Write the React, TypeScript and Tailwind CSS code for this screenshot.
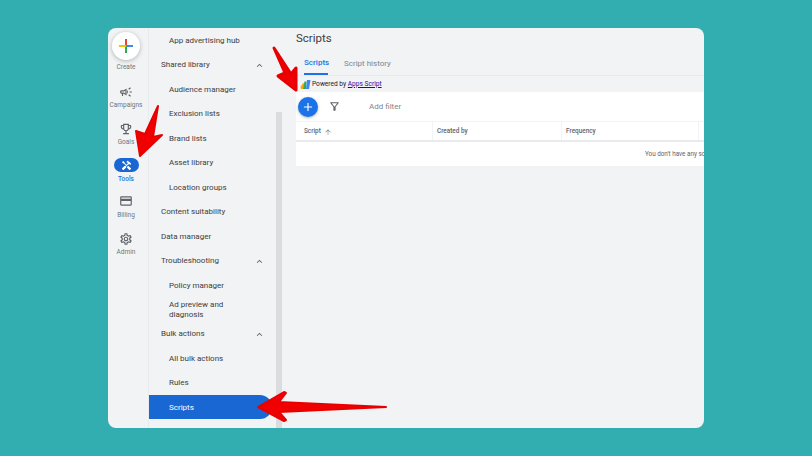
import React from 'react';
import {
  MdOutlineCampaign,
  MdOutlineEmojiEvents,
  MdHandyman,
  MdOutlineCreditCard,
  MdOutlineSettings,
  MdOutlineFilterAlt,
  MdKeyboardArrowUp,
  MdArrowUpward,
  MdAdd,
} from 'react-icons/md';

const font = { fontFamily: 'Roboto, "Liberation Sans", sans-serif' };

const GoogleAdsPlus = () => (
  <svg width="16" height="16" viewBox="0 0 16 16">
    <rect x="7" y="1" width="2" height="7" fill="#ea4335" />
    <rect x="8" y="7" width="7" height="2" fill="#4285f4" />
    <rect x="7" y="8" width="2" height="7" fill="#34a853" />
    <rect x="1" y="7" width="7" height="2" fill="#fbbc04" />
  </svg>
);

const AppsScriptLogo = () => (
  <svg width="11" height="11" viewBox="0 0 11 11" className="shrink-0">
    <path d="M0.5 8 L3 4 L4.5 5 L3 10 L1 10 Z" fill="#f9ab00" />
    <path d="M3 10 L4.5 2.5 L6.5 2.5 L6 10 Z" fill="#34a853" />
    <path d="M6 10 L7 1 L10.5 1 L9 10 Z" fill="#4285f4" />
  </svg>
);

const RailItem = ({ icon, label, className, labelGap }: { icon: React.ReactNode; label: string; className: string; labelGap: string }) => (
  <div className={`flex flex-col items-center ${className}`}>
    <div className="h-[14px] flex items-center justify-center text-[#5f6368]">{icon}</div>
    <span className={`text-[6.5px] leading-[9px] text-[#70757a] ${labelGap}`}>{label}</span>
  </div>
);

const Section = ({ label }: { label: string }) => (
  <div className="h-[24.5px] pt-[1px] flex items-center justify-between pl-[12px] pr-[7px] text-[8px] text-[#3c4043]">
    <span>{label}</span>
    <MdKeyboardArrowUp size={11} className="text-[#5f6368]" />
  </div>
);

const NavItem = ({ label }: { label: string }) => (
  <div className="h-[24.5px] pt-[1px] flex items-center pl-[20px] text-[8px] text-[#3c4043]">{label}</div>
);

const TopLevel = ({ label }: { label: string }) => (
  <div className="h-[24.5px] pt-[1px] flex items-center pl-[12px] text-[8px] text-[#3c4043]">{label}</div>
);

const Arrows = () => (
  <svg width="812" height="456" viewBox="0 0 812 456" className="absolute left-0 top-0 pointer-events-none">
    <g fill="#f00000" stroke="#e80000" strokeWidth="2" strokeLinejoin="round">
      <path d="M158 106 L153 137 L162 135 L140 156 L136 131 L145 134 Z" />
      <path d="M274 48 L291 74 L296 68 L296 90 L278 76 L285 73 Z" strokeWidth="3" />
      <path d="M386 407 L279 402 L286 393 L284 392 L258 407 L284 421 L286 420 L279 412 Z" />
    </g>
  </svg>
);

export default function App() {
  return (
    <div className="relative w-[812px] h-[456px] bg-[#32adb0] pt-[28px] pl-[108px] overflow-hidden" style={font}>
      <div className="w-[596px] h-[400px] bg-[#f1f3f4] rounded-[8px] overflow-hidden flex">
        {/* Icon rail */}
        <div className="w-[41px] shrink-0 pr-[4px] border-r border-[#e8eaed] flex flex-col items-center">
          <div className="mt-[4px] w-[28px] h-[28px] rounded-full bg-white shadow-[0_1px_4px_rgba(60,64,67,0.35)] flex items-center justify-center">
            <GoogleAdsPlus />
          </div>
          <span className="text-[6.5px] leading-[9px] mt-[3px] text-[#70757a]">Create</span>
          <RailItem icon={<MdOutlineCampaign size={14} />} label="Campaigns" className="mt-[13px]" labelGap="mt-[2px]" />
          <RailItem icon={<MdOutlineEmojiEvents size={14} />} label="Goals" className="mt-[12px]" labelGap="mt-[2px]" />
          <div className="mt-[11px] flex flex-col items-center">
            <div className="w-[25px] h-[14px] rounded-full bg-[#1967d2] flex items-center justify-center text-white">
              <MdHandyman size={11} />
            </div>
            <span className="text-[6.5px] leading-[9px] mt-[3px] font-medium text-[#1a73e8]">Tools</span>
          </div>
          <RailItem icon={<MdOutlineCreditCard size={14} />} label="Billing" className="mt-[10px]" labelGap="mt-[3px]" />
          <RailItem icon={<MdOutlineSettings size={14} />} label="Admin" className="mt-[12px]" labelGap="mt-[2px]" />
        </div>

        {/* Tool navigation */}
        <div className="w-[123px] shrink-0 flex flex-col">
          <NavItem label="App advertising hub" />
          <Section label="Shared library" />
          <NavItem label="Audience manager" />
          <NavItem label="Exclusion lists" />
          <NavItem label="Brand lists" />
          <NavItem label="Asset library" />
          <NavItem label="Location groups" />
          <TopLevel label="Content suitability" />
          <TopLevel label="Data manager" />
          <Section label="Troubleshooting" />
          <NavItem label="Policy manager" />
          <div className="h-[24px] pt-[1px] flex items-center pl-[20px] text-[8px] leading-[10px] text-[#3c4043]">
            Ad preview and
            <br />
            diagnosis
          </div>
          <Section label="Bulk actions" />
          <NavItem label="All bulk actions" />
          <NavItem label="Rules" />
          <div className="h-[24px] pt-[1px] flex items-center pl-[20px] text-[8px] text-white bg-[#1967d2] rounded-r-[12px]">
            Scripts
          </div>
        </div>

        {/* Scrollbar */}
        <div className="w-[14px] shrink-0 pl-[4px] pt-[84px]">
          <div className="w-[6px] h-full bg-[#dadce0]" />
        </div>

        {/* Main */}
        <div className="flex-1 min-w-0 flex flex-col pl-[10px]">
          <div className="text-[11.5px] leading-[14px] text-[#3c4043] mt-[3px]">Scripts</div>
          <div className="h-[24px] mt-[7px] flex items-end gap-[16px] pl-[8px] border-b border-[#e8eaed] text-[8px]">
            <div className="h-full flex items-center font-medium text-[#1a73e8] border-b-2 border-[#1a73e8] w-[24px]">Scripts</div>
            <div className="h-full flex items-center text-[#80868b]">Script history</div>
          </div>
          <div className="h-[16px] pt-[1px] flex items-center gap-[1px] pl-[4px] text-[6.6px] text-[#202124]">
            <AppsScriptLogo />
            <span>
              Powered by <span className="text-[#1a0dab] underline">Apps Script</span>
            </span>
          </div>
          <div className="bg-white w-[408px]">
            <div className="h-[29px] flex items-center">
              <div className="w-[20px] h-[20px] ml-[2px] rounded-full bg-[#1a73e8] shadow-[0_1px_3px_rgba(60,64,67,0.4)] flex items-center justify-center text-white">
                <MdAdd size={14} />
              </div>
              <MdOutlineFilterAlt size={13} className="ml-[10px] text-[#5f6368]" />
              <span className="ml-[28px] text-[8px] text-[#80868b]">Add filter</span>
            </div>
            <div className="h-[21px] grid grid-cols-[137px_129px_137px_5px] border-t border-[#f1f3f4] border-b-2 border-b-[#e8eaed] text-[6.4px] font-medium text-[#5f6368]">
              <div className="flex items-center gap-[3px] pl-[8px] pt-[1px] border-r border-[#f1f3f4]">
                Script <MdArrowUpward size={8} className="text-[#80868b]" />
              </div>
              <div className="flex items-center pl-[4px] pt-[1px] border-r border-[#f1f3f4]">Created by</div>
              <div className="flex items-center pl-[4px] pt-[1px] border-r border-[#f1f3f4]">Frequency</div>
              <div />
            </div>
            <div className="h-[24px] pt-[1px] flex items-center pl-[349px] text-[6.3px] whitespace-nowrap text-[#5f6368]">
              You don't have any scripts
            </div>
          </div>
        </div>
      </div>
      <Arrows />
    </div>
  );
}
